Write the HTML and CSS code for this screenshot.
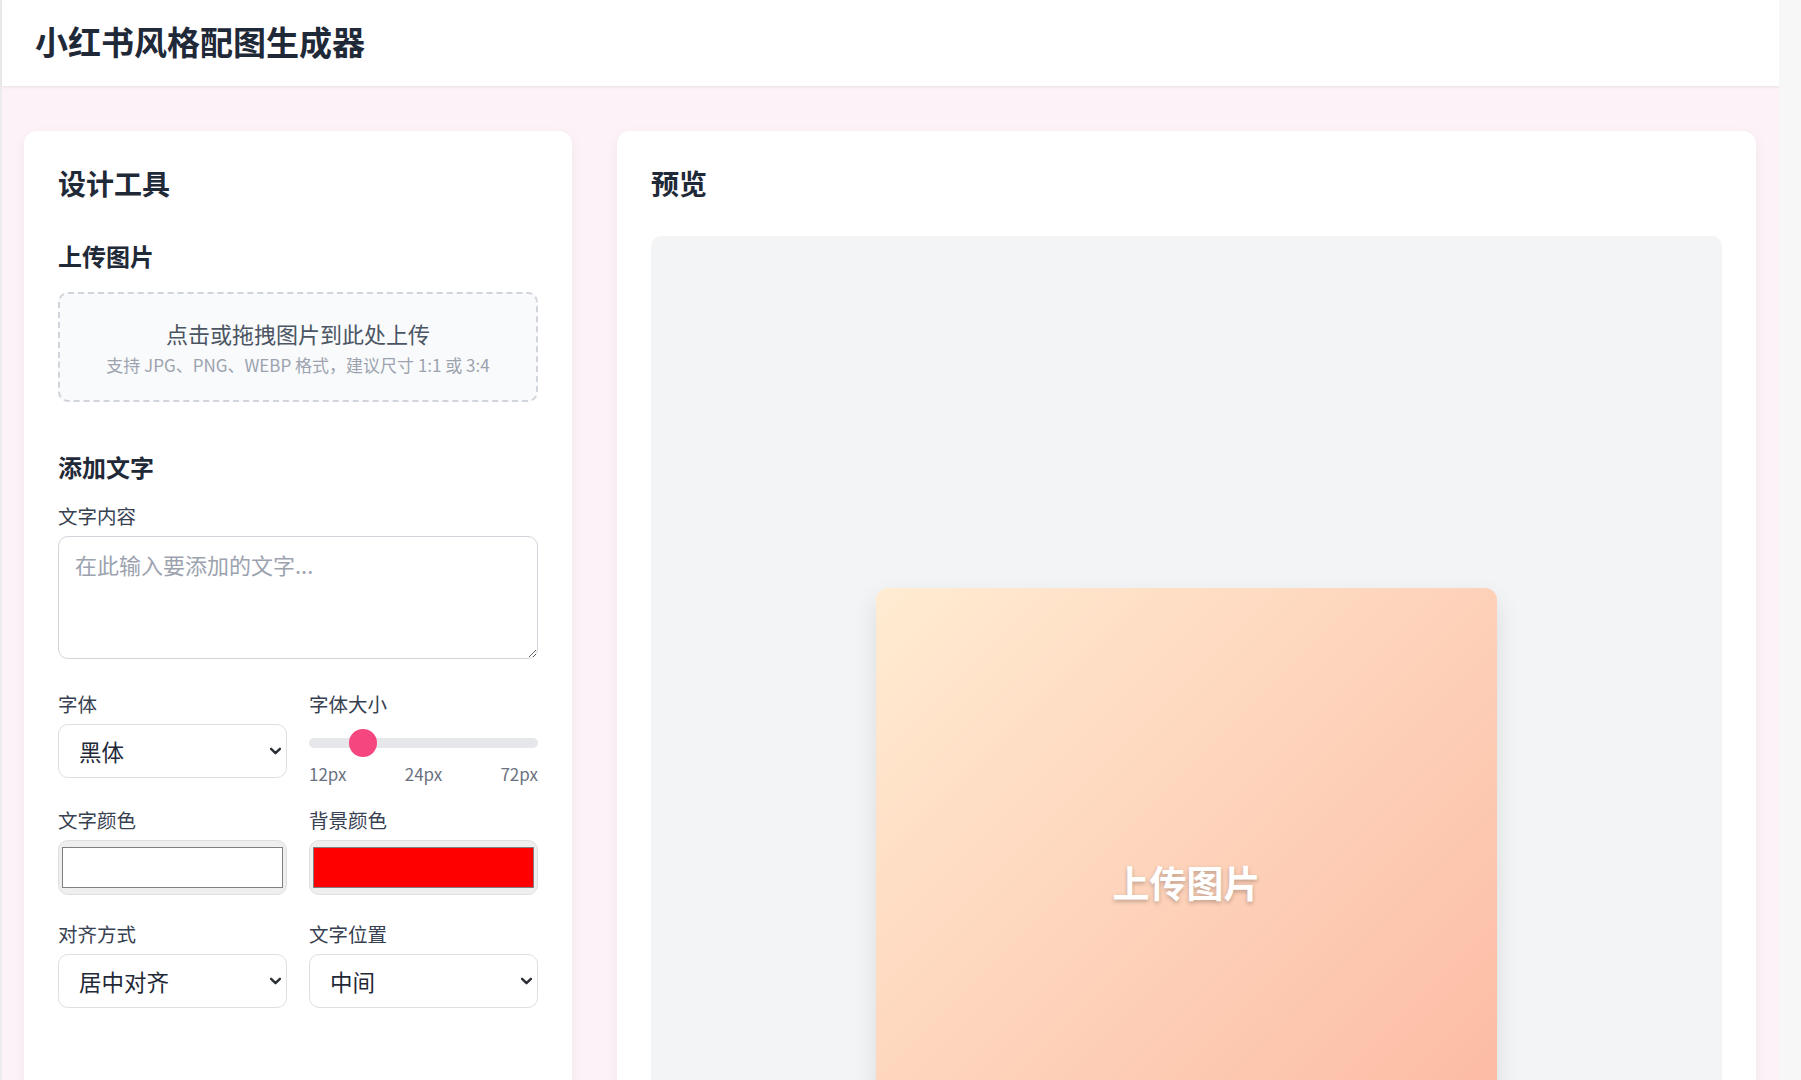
FILE: index.html
```html
<!DOCTYPE html>
<html lang="zh-CN">
<head>
<meta charset="UTF-8">
<title>小红书风格配图生成器</title>
<link rel="stylesheet" href="styles.css">
</head>
<body>
<div class="app">
  <div class="page">
    <header class="topbar">
      <h1>小红书风格配图生成器</h1>
    </header>
    <main class="workspace">
      <section class="card tools">
        <h2>设计工具</h2>
        <div class="group">
          <h3>上传图片</h3>
          <label class="dropzone">
            <span class="drop-main">点击或拖拽图片到此处上传</span>
            <span class="drop-hint">支持 JPG、PNG、WEBP 格式，建议尺寸 1:1 或 3:4</span>
          </label>
        </div>
        <div class="group group-text">
          <h3>添加文字</h3>
          <label class="field-label" for="txt">文字内容</label>
          <textarea id="txt" class="text-input" placeholder="在此输入要添加的文字..."></textarea>

          <div class="field-row row-1">
            <div class="field">
              <label class="field-label">字体</label>
              <div class="select-wrap">
                <select class="select"><option>黑体</option></select>
                <svg class="chevron" viewBox="0 0 10 7"><path d="M1 1.5 L5 5.5 L9 1.5" /></svg>
              </div>
            </div>
            <div class="field">
              <label class="field-label">字体大小</label>
              <input class="range" type="range" min="12" max="72" value="24">
              <div class="ticks"><span>12px</span><span>24px</span><span>72px</span></div>
            </div>
          </div>

          <div class="field-row row-2">
            <div class="field">
              <label class="field-label">文字颜色</label>
              <input class="color-input" type="color" value="#ffffff">
            </div>
            <div class="field">
              <label class="field-label">背景颜色</label>
              <input class="color-input" type="color" value="#ff0000">
            </div>
          </div>

          <div class="field-row row-3">
            <div class="field">
              <label class="field-label">对齐方式</label>
              <div class="select-wrap">
                <select class="select"><option>居中对齐</option></select>
                <svg class="chevron" viewBox="0 0 10 7"><path d="M1 1.5 L5 5.5 L9 1.5" /></svg>
              </div>
            </div>
            <div class="field">
              <label class="field-label">文字位置</label>
              <div class="select-wrap">
                <select class="select"><option>中间</option></select>
                <svg class="chevron" viewBox="0 0 10 7"><path d="M1 1.5 L5 5.5 L9 1.5" /></svg>
              </div>
            </div>
          </div>
        </div>
      </section>

      <section class="card preview">
        <h2>预览</h2>
        <div class="stage">
          <div class="canvas"><span class="canvas-text">上传图片</span></div>
        </div>
      </section>
    </main>
  </div>
  <div class="scroll-track" aria-hidden="true"></div>
</div>
</body>
</html>
```

FILE: styles.css
```css
html, body {
  margin: 0;
  padding: 0;
}

body {
  font-family: "Noto Sans CJK SC", "Noto Sans", sans-serif;
  color: #1f2937;
}

.app {
  display: flex;
  height: 100vh;
  overflow: hidden;
}

.page {
  flex: 1;
  min-width: 0;
  background: #fdf2f8;
  border-left: 2px solid #ececec;
}

.scroll-track {
  flex: none;
  width: 22px;
  background: #f7f7f7;
}

/* header */
.topbar {
  height: 86px;
  box-sizing: border-box;
  background: #fff;
  box-shadow: 0 1px 3px rgba(0, 0, 0, 0.08);
  display: flex;
  align-items: center;
  padding: 0 33px 2px;
}

.topbar h1 {
  margin: 0;
  font-size: 33px;
  line-height: 1.2;
  font-weight: 700;
  color: #1f2937;
}

/* layout */
.workspace {
  display: grid;
  grid-template-columns: 548px 1fr;
  gap: 45px;
  padding: 45px 23px 0 22px;
}

.card {
  background: #fff;
  border-radius: 13px;
  padding: 34px;
  box-shadow: 0 4px 14px rgba(0, 0, 0, 0.05);
}

.card h2 {
  margin: 0 0 35px;
  font-size: 28px;
  line-height: 36px;
  font-weight: 700;
  color: #1f2937;
}

.group h3 {
  margin: 0 0 16px;
  font-size: 24px;
  line-height: 40px;
  font-weight: 700;
  color: #1f2937;
}

.group-text {
  margin-top: 45px;
}

/* upload */
.dropzone {
  display: flex;
  flex-direction: column;
  align-items: center;
  height: 110px;
  box-sizing: border-box;
  border: 2px dashed #d1d5db;
  border-radius: 10px;
  background: #f9fafb;
  padding-top: 24px;
}

.drop-main {
  font-size: 22px;
  line-height: 30px;
  color: #4b5563;
}

.drop-hint {
  margin-top: 6px;
  font-size: 17px;
  line-height: 22px;
  color: #9ca3af;
}

/* fields */
.field-label {
  display: block;
  font-size: 19.5px;
  line-height: 26px;
  color: #374151;
  margin-bottom: 7px;
}

.text-input {
  display: block;
  width: 100%;
  height: 123px;
  box-sizing: border-box;
  margin: 0;
  padding: 12px 16px;
  border: 1px solid #d1d5db;
  border-radius: 10px;
  font-family: inherit;
  font-size: 22px;
  line-height: 1.4;
  color: #1f2937;
  background: #fff;
}

.text-input::placeholder {
  color: #9ca3af;
}

.field-row {
  display: grid;
  grid-template-columns: 1fr 1fr;
  column-gap: 22px;
  align-items: start;
}

.row-1 { margin-top: 32px; }
.row-2 { margin-top: 22px; }
.row-3 { margin-top: 26px; }

.select-wrap {
  position: relative;
}

.select {
  display: block;
  width: 100%;
  height: 54px;
  margin: 0;
  box-sizing: border-box;
  padding: 0 36px 0 20px;
  border: 1px solid #dcdfe4;
  border-radius: 10px;
  background: #fff;
  font-family: inherit;
  font-size: 22.5px;
  color: #1f2937;
  -webkit-appearance: none;
  appearance: none;
}

.chevron {
  position: absolute;
  right: 6px;
  top: 50%;
  width: 11px;
  height: 8px;
  margin-top: -4px;
  pointer-events: none;
}

.chevron path {
  fill: none;
  stroke: #2b2f36;
  stroke-width: 2.2;
  stroke-linecap: round;
  stroke-linejoin: round;
}

/* range */
.range {
  display: block;
  width: 100%;
  height: 28px;
  margin: 12px 0 0;
  padding: 0;
  background: transparent;
  -webkit-appearance: none;
  appearance: none;
}

.range::-webkit-slider-runnable-track {
  height: 10px;
  background: #e5e7eb;
  border-radius: 5px;
  border: none;
}

.range::-webkit-slider-thumb {
  -webkit-appearance: none;
  appearance: none;
  width: 28px;
  height: 28px;
  margin-top: -9px;
  border: none;
  border-radius: 50%;
  background: #f5467f;
}

.ticks {
  display: flex;
  justify-content: space-between;
  margin-top: 6px;
  font-size: 17px;
  line-height: 22px;
  color: #6b7280;
}

/* color inputs */
.color-input {
  display: block;
  width: 100%;
  height: 55px;
  margin: 0;
  box-sizing: border-box;
  padding: 6px 3px;
  border: 1px solid #dcdfe4;
  border-radius: 10px;
  background: #efefef;
  -webkit-appearance: none;
  appearance: none;
}

.color-input::-webkit-color-swatch-wrapper {
  padding: 0;
}

.color-input::-webkit-color-swatch {
  border: 1px solid #808080;
  border-radius: 0;
}

/* preview */
.stage {
  height: 1325px;
  background: #f3f4f6;
  border-radius: 10px;
  display: flex;
  justify-content: center;
  align-items: center;
}

.canvas {
  width: 621px;
  height: 621px;
  box-sizing: border-box;
  padding-bottom: 33px;
  border-radius: 12px;
  background: linear-gradient(135deg, #ffecd2 0%, #fcb69f 100%);
  box-shadow: 0 10px 25px rgba(0, 0, 0, 0.1);
  display: flex;
  align-items: center;
  justify-content: center;
}

.canvas-text {
  color: #fff;
  font-size: 37px;
  font-weight: 700;
  text-shadow: 0 2px 4px rgba(0, 0, 0, 0.25);
}
```
